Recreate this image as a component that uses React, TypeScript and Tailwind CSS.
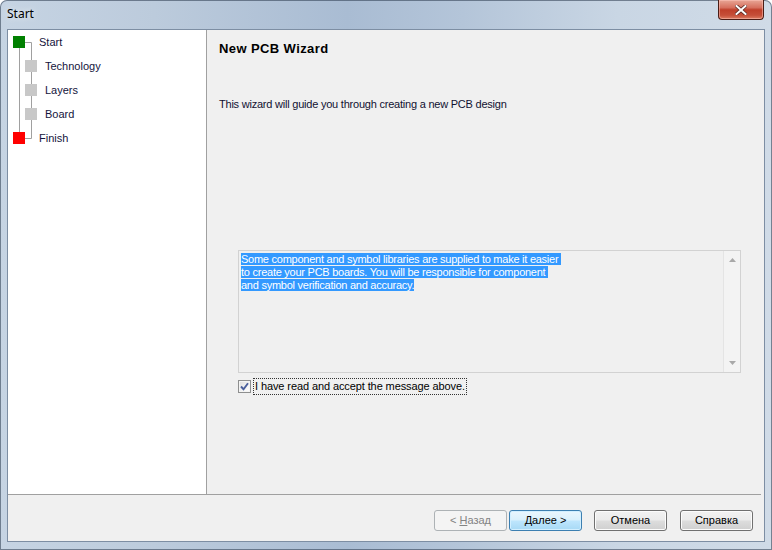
import React from "react";

const F = { fontFamily: '"Liberation Sans", Arial, sans-serif' };

function Btn({
  children,
  kind = "normal",
  className = "",
}: {
  children: React.ReactNode;
  kind?: "normal" | "default" | "disabled";
  className?: string;
}) {
  const base =
    "h-[21px] w-[73px] rounded-[3px] border text-[11px] flex items-center justify-center leading-none";
  const k =
    kind === "default"
      ? "border-[#3c7fb1] text-black bg-[linear-gradient(180deg,#eaf6fd_0%,#d9f0fc_48%,#bee6fd_52%,#a7d9f5_100%)] shadow-[inset_0_0_0_1px_#d2efff]"
      : kind === "disabled"
      ? "border-[#adb2b5] text-[#838383] bg-[#f4f4f4]"
      : "border-[#707070] text-black bg-[linear-gradient(180deg,#f2f2f2_0%,#ebebeb_48%,#dddddd_52%,#cfcfcf_100%)] shadow-[inset_0_0_0_1px_#fcfcfc]";
  return (
    <div className={`${base} ${k} ${className}`} style={F}>
      {children}
    </div>
  );
}

export default function App() {
  return (
    <div className="relative w-[772px] h-[550px] overflow-hidden rounded-t-[7px] flex flex-col bg-[linear-gradient(90deg,#c6d4e3_0%,#bccbdc_20%,#a9bcd3_45%,#b4c5d9_60%,#c9d6e4_80%,#d0dbe7_100%)] shadow-[inset_0_0_0_1px_rgba(40,55,75,0.55)]">
      {/* Title bar */}
      <div className="h-[29px] flex items-center pl-[7px] pb-[1px]">
        <span
          className="text-[12px] text-black [text-shadow:0_0_6px_rgba(255,255,255,0.9)]"
          style={{ fontFamily: '"Noto Sans", "Open Sans", sans-serif' }}
        >
          Start
        </span>
      </div>
      {/* Close button */}
      <div className="absolute top-0 right-[8px] w-[46px] h-[20px] rounded-b-[4px] border border-t-0 border-[#4a1c15] bg-[linear-gradient(180deg,#e8a696_0%,#d6705e_40%,#bf3f2a_52%,#c54e38_80%,#dc7c62_100%)] flex items-center justify-center shadow-[inset_0_0_0_1px_rgba(255,200,190,0.5)]">
        <svg width="12" height="10" viewBox="0 0 12 10">
          <path d="M1.5 1 L10.5 9 M10.5 1 L1.5 9" stroke="#5a2a24" strokeWidth="3.6" strokeLinecap="square" />
          <path d="M1.5 1 L10.5 9 M10.5 1 L1.5 9" stroke="#ffffff" strokeWidth="2" strokeLinecap="square" />
        </svg>
      </div>

      {/* Client area */}
      <div className="mx-[7px] h-[513px] border border-[#7d8ea3] bg-[#f0f0f0] flex flex-col">
        <div className="h-[464px] flex">
          {/* Left tree panel */}
          <div className="relative w-[199px] h-full bg-white border-r border-[#a0a0a0]">
            <svg className="absolute left-0 top-0" width="40" height="120" viewBox="0 0 40 120">
              <path d="M11.5 18 V102" stroke="#a0a0a0" strokeWidth="1" />
              <path d="M17 12.5 H23.5 V108.5 H17" stroke="#a0a0a0" strokeWidth="1" fill="none" />
              <rect x="5" y="6" width="12" height="12" fill="#008000" />
              <rect x="17" y="30" width="12" height="12" fill="#c8c8c8" />
              <rect x="17" y="54" width="12" height="12" fill="#c8c8c8" />
              <rect x="17" y="78" width="12" height="12" fill="#c8c8c8" />
              <rect x="5" y="102" width="12" height="12" fill="#ff0000" />
            </svg>
            <div className="relative flex flex-col text-[11px] text-[#14143c]" style={F}>
              <div className="h-[24px] flex items-center pl-[31px]">Start</div>
              <div className="h-[24px] flex items-center pl-[37px]">Technology</div>
              <div className="h-[24px] flex items-center pl-[37px]">Layers</div>
              <div className="h-[24px] flex items-center pl-[37px]">Board</div>
              <div className="h-[24px] flex items-center pl-[31px]">Finish</div>
            </div>
          </div>

          {/* Right content */}
          <div className="flex-1 flex flex-col pl-[12px]" style={F}>
            <div className="mt-[11px] text-[13px] leading-[16px] font-bold text-black tracking-[0.4px]">New PCB Wizard</div>
            <div className="mt-[41px] text-[11px] leading-[13px] text-[#111130] tracking-[-0.22px]">
              This wizard will guide you through creating a new PCB design
            </div>

            <div className="mt-[139px] ml-[19px] w-[503px] h-[123px] border border-[#d2d2d2] bg-[#f0f0f0] flex">
              <div className="flex-1 pt-[2px] pl-[2px] text-[11px] leading-[13px] text-white tracking-[-0.25px]">
                <div>
                  <span className="bg-[#3399ff] whitespace-pre">Some component and symbol libraries are supplied to make it easier </span>
                </div>
                <div>
                  <span className="bg-[#3399ff] whitespace-pre">to create your PCB boards. You will be responsible for component </span>
                </div>
                <div>
                  <span className="bg-[#3399ff] whitespace-pre">and symbol verification and accuracy.</span>
                </div>
              </div>
              <div className="w-[17px] h-full border-l border-[#e4e4e4] bg-[#f3f3f3] flex flex-col items-center justify-between py-[7px]">
                <svg width="7" height="4" viewBox="0 0 7 4">
                  <path d="M0 4 L3.5 0 L7 4 Z" fill="#a8a8a8" />
                </svg>
                <svg width="7" height="4" viewBox="0 0 7 4">
                  <path d="M0 0 L3.5 4 L7 0 Z" fill="#a8a8a8" />
                </svg>
              </div>
            </div>

            <div className="mt-[5px] ml-[19px] h-[17px] flex items-center">
              <div className="w-[13px] h-[13px] border border-[#8e8f8f] bg-[linear-gradient(135deg,#dcdcdc_0%,#f4f4f4_60%,#ffffff_100%)] flex items-center justify-center shadow-[inset_0_0_0_1px_#f4f4f4]">
                <svg width="9" height="9" viewBox="0 0 9 9">
                  <path d="M1 4.5 L3.5 7.2 L8 1.2" stroke="#4a5f9c" strokeWidth="1.9" fill="none" />
                </svg>
              </div>
              <div className="ml-[2px] h-[17px] px-[1px] border border-dotted border-[#333] flex items-center text-[11px] text-black tracking-[-0.1px]">
                I have read and accept the message above.
              </div>
            </div>
          </div>
        </div>

        <div className="h-px mr-[3px] bg-[#a0a0a0]" />

        <div className="h-[46px] flex justify-end items-start pt-[15px] pr-[11px]">
          <Btn kind="disabled">
            &lt;&nbsp;<span className="underline">Н</span>азад
          </Btn>
          <Btn kind="default" className="ml-[2px]">
            <span className="underline">Д</span>алее &gt;
          </Btn>
          <Btn className="ml-[12px]">Отмена</Btn>
          <Btn className="ml-[13px]">Справка</Btn>
        </div>
      </div>
    </div>
  );
}
